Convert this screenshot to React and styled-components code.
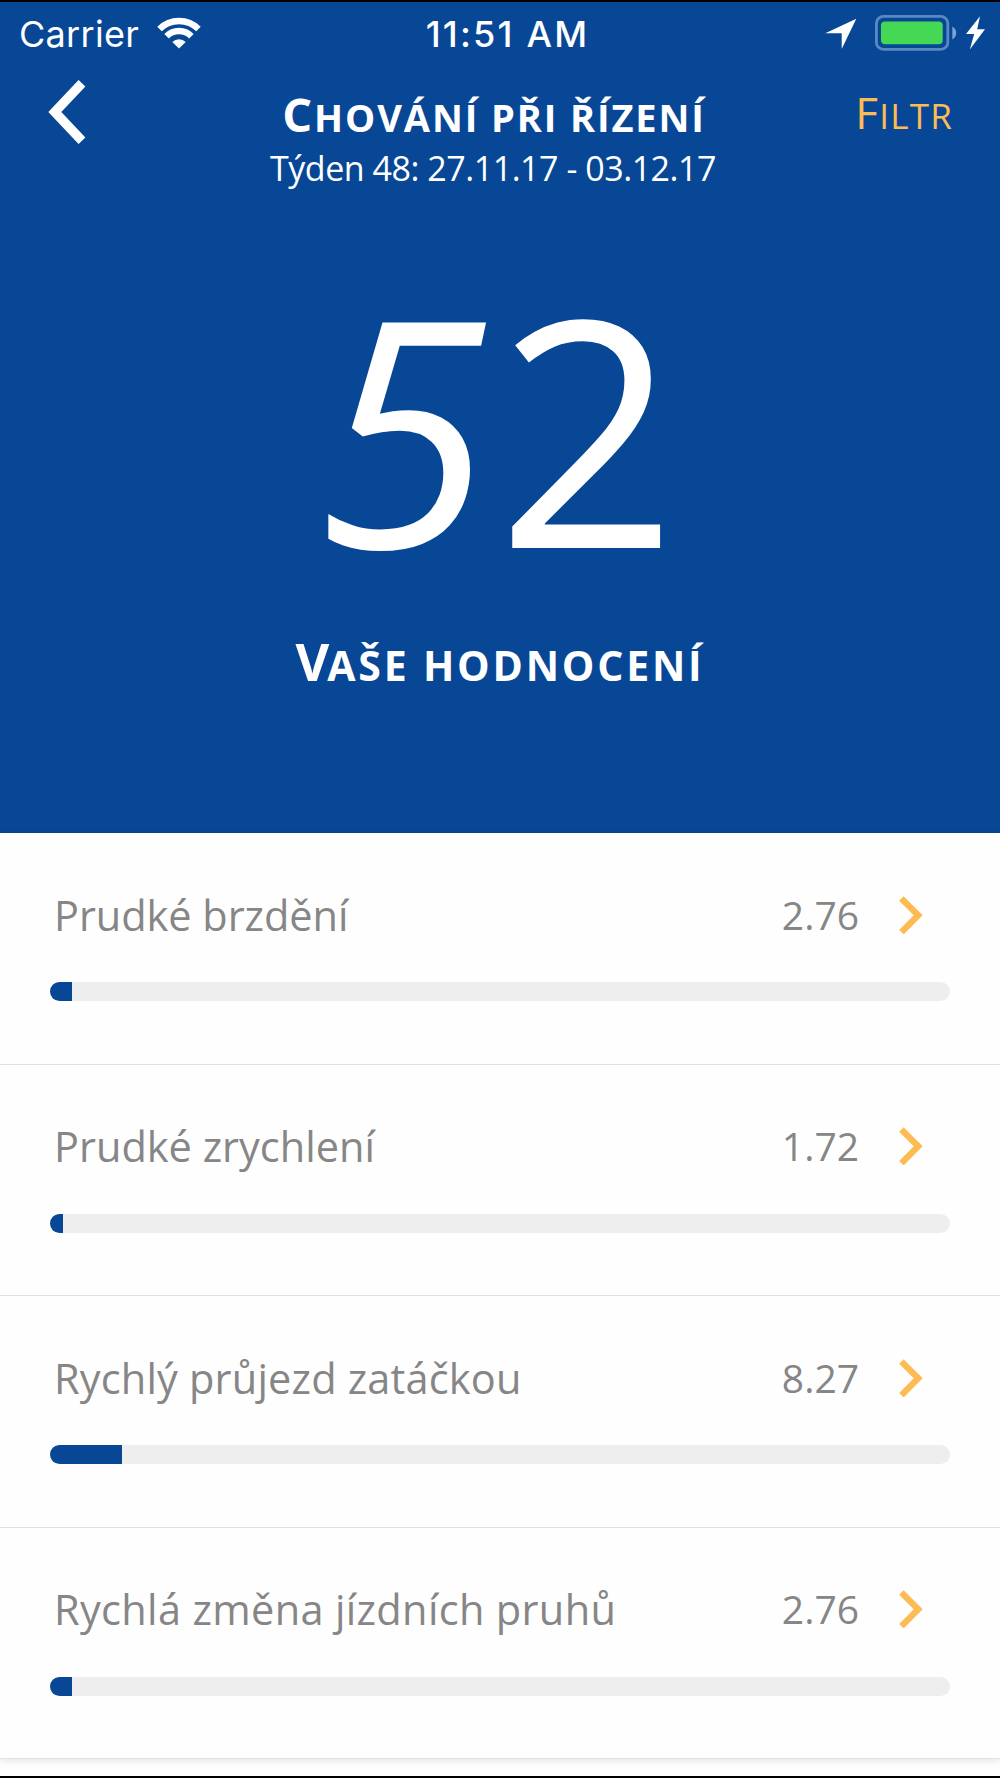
import React from "react";
import styled, { createGlobalStyle } from "styled-components";

const GlobalStyle = createGlobalStyle`
  body {
    margin: 0;
    background: #fefefe;
  }
  * {
    box-sizing: border-box;
  }
`;

const Screen = styled.div`
  width: 1000px;
  height: 1778px;
  margin: 0;
  display: flex;
  flex-direction: column;
  overflow: hidden;
  border-top: 2px solid #000000;
  border-bottom: 2px solid #000000;
  background: #fefefe;
  font-family: "Open Sans", sans-serif;
`;

const Header = styled.header`
  height: 831.4px;
  flex: none;
  background: #074796;
  color: #ffffff;
`;

const StatusBar = styled.div`
  height: 61px;
  padding: 0 15px 0 19px;
  display: grid;
  grid-template-columns: 1fr auto 1fr;
  align-items: center;
  font-family: "Inter", sans-serif;
  font-size: 36px;
  line-height: 44px;
`;

const StatusGroup = styled.div`
  display: flex;
  align-items: center;
  justify-content: ${(props) => (props.$end ? "flex-end" : "flex-start")};
`;

const Carrier = styled.span`
  width: 138px;
  padding-top: 3px;
  letter-spacing: 0.3px;
`;

const Clock = styled.span`
  padding: 3px 0 0 11px;
  font-weight: 500;
  letter-spacing: 2.2px;
`;

const BatteryIcon = styled.svg`
  margin: 0 9px 0 18px;
`;

const NavBar = styled.div`
  padding: 17px 45px 0 46px;
  display: grid;
  grid-template-columns: 200px 1fr 200px;
  align-items: start;
`;

const BackButton = styled.button`
  width: 42px;
  height: 64px;
  margin: 0;
  padding: 0;
  border: none;
  background: none;
  color: inherit;
  cursor: pointer;
`;

const TitleBlock = styled.div`
  padding: 11px 13px 0 0;
  text-align: center;
  white-space: nowrap;
`;

// first letter is a full capital, the rest are small capitals
const Title = styled.h1`
  margin: 0;
  font-size: 38px;
  font-weight: 700;
  line-height: 52px;
  letter-spacing: 1.9px;
  text-transform: uppercase;
  &::first-letter {
    font-size: 47px;
    line-height: 1;
  }
`;

const Period = styled.p`
  margin: 5px 0 0 -2px;
  font-size: 34px;
  line-height: 40px;
  letter-spacing: -0.47px;
`;

const FilterButton = styled.button`
  justify-self: end;
  margin: 10px 2px 0 0;
  padding: 0;
  border: none;
  background: none;
  color: #fdbb53;
  font-family: inherit;
  font-size: 35px;
  line-height: 52px;
  letter-spacing: 1.2px;
  text-transform: uppercase;
  cursor: pointer;
  &::first-letter {
    font-size: 44px;
    line-height: 1;
  }
`;

const Score = styled.div`
  margin-top: 82px;
  text-align: center;
  font-size: 316px;
  line-height: 312px;
  letter-spacing: 6px;
  &::first-letter {
    font-style: italic;
  }
`;

const ScoreLabel = styled.h2`
  margin: 53px 0 0 0;
  text-align: center;
  font-size: 41px;
  font-weight: 700;
  line-height: 60px;
  letter-spacing: 2.8px;
  text-transform: uppercase;
  &::first-letter {
    margin-right: -5px;
    font-size: 52px;
    line-height: 1;
  }
`;

const List = styled.ul`
  margin: 0;
  padding: 0;
  list-style: none;
  box-shadow: 0 2px 8px rgba(0, 0, 0, 0.1);
`;

const Row = styled.li`
  height: 231.4px;
  padding: 53.4px 50px 0;
  border-bottom: 1px solid #e2e2e2;
  background: #fefefe;
  cursor: pointer;
`;

const RowHead = styled.div`
  height: 56px;
  padding: 0 27px 0 4px;
  display: flex;
  align-items: center;
  color: #868686;
  line-height: 56px;
`;

const RowLabel = styled.span`
  flex: 1;
  font-size: 41.5px;
  letter-spacing: ${(props) => props.$spacing}px;
`;

const RowValue = styled.span`
  margin-right: 40px;
  font-size: 39px;
`;

const Track = styled.div`
  height: 19px;
  margin-top: 39.6px;
  border-radius: 9.5px;
  overflow: hidden;
  background: #eeeeee;
`;

const Fill = styled.div`
  height: 100%;
  background: #074796;
`;

const rows = [
  { label: "Prudké brzdění", value: "2.76", fill: 2.44, spacing: -0.05 },
  { label: "Prudké zrychlení", value: "1.72", fill: 1.44, spacing: 0 },
  { label: "Rychlý průjezd zatáčkou", value: "8.27", fill: 8, spacing: 0.18 },
  { label: "Rychlá změna jízdních pruhů", value: "2.76", fill: 2.44, spacing: 0.34 },
];

const App = () => {
  return (
    <>
      <GlobalStyle />
      <Screen>
        <Header>
          <StatusBar>
            <StatusGroup>
              <Carrier>Carrier</Carrier>
              <svg width="44" height="32" viewBox="0 0 44 32">
                <g fill="none" stroke="#ffffff" strokeWidth="6.4">
                  <path d="M2.5 12 A27.7 27.7 0 0 1 41.5 12" />
                  <path d="M9.6 19.2 A17.5 17.5 0 0 1 34.4 19.2" />
                </g>
                <path d="M22 31.5 L15.3 25 A9.5 9.5 0 0 1 28.7 25 Z" fill="#ffffff" />
              </svg>
            </StatusGroup>
            <Clock>11:51 AM</Clock>
            <StatusGroup $end>
              <svg width="32" height="32" viewBox="0 0 32 32">
                <path d="M0.3 16.2 L31.3 1.8 L16.7 32 L16.7 16.2 Z" fill="#ffffff" />
              </svg>
              <BatteryIcon width="82" height="36" viewBox="0 0 82 36">
                <rect x="1.4" y="1.4" width="71.4" height="33" rx="7" fill="none" stroke="#588ac2" strokeWidth="2.8" />
                <rect x="6" y="6.4" width="61.7" height="22.8" rx="4" fill="#45d854" />
                <path d="M77.3 11.4 Q81.2 13.5 81.2 17.9 Q81.2 22.3 77.3 24.4 Z" fill="#7ba3d2" />
              </BatteryIcon>
              <svg width="19" height="34" viewBox="0 0 19 34">
                <path d="M14 0.3 L0 18 L8.2 18 L3.8 33.5 L19 13.2 L11.2 13.2 Z" fill="#ffffff" />
              </svg>
            </StatusGroup>
          </StatusBar>
          <NavBar>
            <BackButton>
              <svg width="42" height="64" viewBox="0 0 42 64">
                <path d="M36 3.2 L8.8 32 L36 60.8" fill="none" stroke="#ffffff" strokeWidth="9.4" />
              </svg>
            </BackButton>
            <TitleBlock>
              <Title>Chování při řízení</Title>
              <Period>Týden 48: 27.11.17 - 03.12.17</Period>
            </TitleBlock>
            <FilterButton>Filtr</FilterButton>
          </NavBar>
          <Score>52</Score>
          <ScoreLabel>Vaše hodnocení</ScoreLabel>
        </Header>
        <List>
          {rows.map((row) => (
            <Row key={row.label}>
              <RowHead>
                <RowLabel $spacing={row.spacing}>{row.label}</RowLabel>
                <RowValue>{row.value}</RowValue>
                <svg width="24" height="38" viewBox="0 0 24 38">
                  <path d="M2.4 2.4 L19.2 19.3 L2.4 36.2" fill="none" stroke="#fdbb53" strokeWidth="6.4" />
                </svg>
              </RowHead>
              <Track>
                <Fill style={{ width: `${row.fill}%` }} />
              </Track>
            </Row>
          ))}
        </List>
      </Screen>
    </>
  );
};

export default App;
